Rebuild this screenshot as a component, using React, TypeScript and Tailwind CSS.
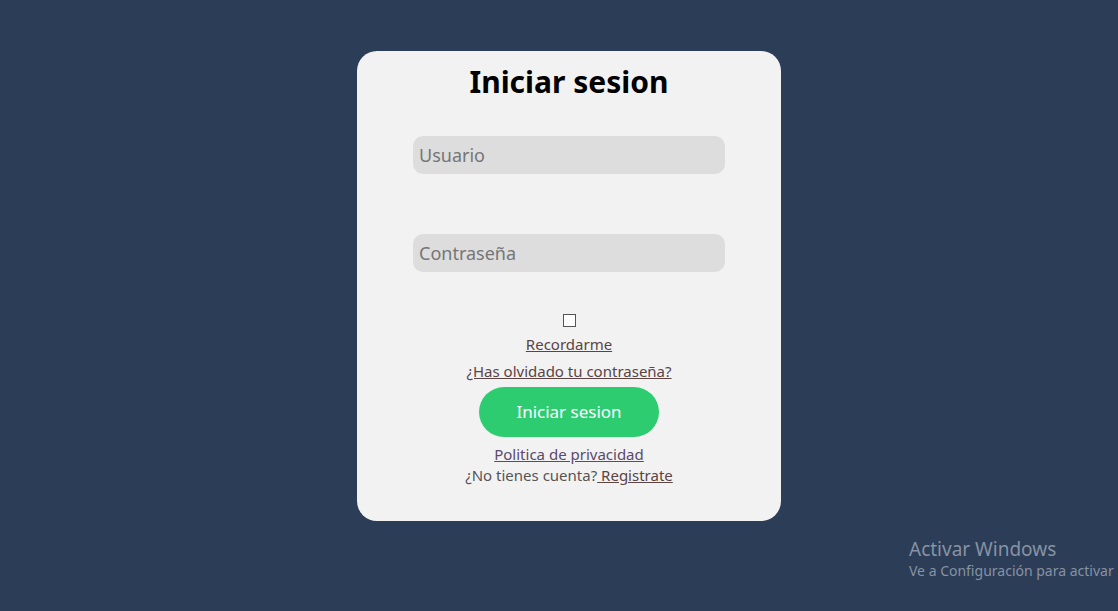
import React, { useState } from "react";

const App: React.FC = () => {
  const [user, setUser] = useState("");
  const [pass, setPass] = useState("");
  const [remember, setRemember] = useState(false);

  return (
    <div className="relative flex min-h-screen justify-center bg-[#2c3d58] pt-[51px] pl-[20px] font-['Noto_Sans',sans-serif]">
      {/* Tarjeta de login */}
      <form className="flex h-[470px] w-[424px] flex-col items-center rounded-[20px] bg-[#f2f2f2]">
        <h1 className="mt-[9px] text-[30px] leading-[44px] font-bold text-black">Iniciar sesion</h1>

        <input
          type="text"
          placeholder="Usuario"
          value={user}
          onChange={(e) => setUser(e.target.value)}
          className="mt-[32px] h-[38px] w-[312px] rounded-[10px] bg-[#dddddd] px-[6px] text-[18px] text-[#333] outline-none placeholder:text-[#767676]"
        />
        <input
          type="password"
          placeholder="Contraseña"
          value={pass}
          onChange={(e) => setPass(e.target.value)}
          className="mt-[60px] h-[38px] w-[312px] rounded-[10px] bg-[#dddddd] px-[6px] text-[18px] text-[#333] outline-none placeholder:text-[#767676]"
        />

        {/* Recordarme */}
        <div className="mt-[42px] flex flex-col items-center">
          <input
            type="checkbox"
            checked={remember}
            onChange={(e) => setRemember(e.target.checked)}
            className="h-[13px] w-[13px] appearance-none border border-[#555] bg-white"
          />
          <a href="#" className="mt-[6px] text-[15px] leading-[22px] text-[#5a4444] underline">
            Recordarme
          </a>
        </div>
        <a href="#" className="mt-[5px] text-[15px] leading-[22px] text-[#5a4444] underline">
          ¿Has olvidado tu contraseña?
        </a>

        <button
          type="button"
          className="mt-[5px] h-[50px] w-[180px] rounded-full bg-[#2ecc71] text-[17px] text-white"
        >
          Iniciar sesion
        </button>

        <a href="#" className="mt-[7px] text-[15px] leading-[21px] text-[#5a4a6a] underline">
          Politica de privacidad
        </a>
        <p className="text-[15px] leading-[21px] text-[#555]">
          ¿No tienes cuenta?
          <a href="#" className="text-[#5a4444] underline">
            {" "}Registrate
          </a>
        </p>
      </form>

      {/* Marca de agua de Windows */}
      <div className="absolute left-[909px] top-[537px] whitespace-nowrap text-[#8792a2]">
        <p className="text-[19px] leading-[24px]">Activar Windows</p>
        <p className="text-[14px] leading-[20px]">Ve a Configuración para activar</p>
      </div>
    </div>
  );
};

export default App;
